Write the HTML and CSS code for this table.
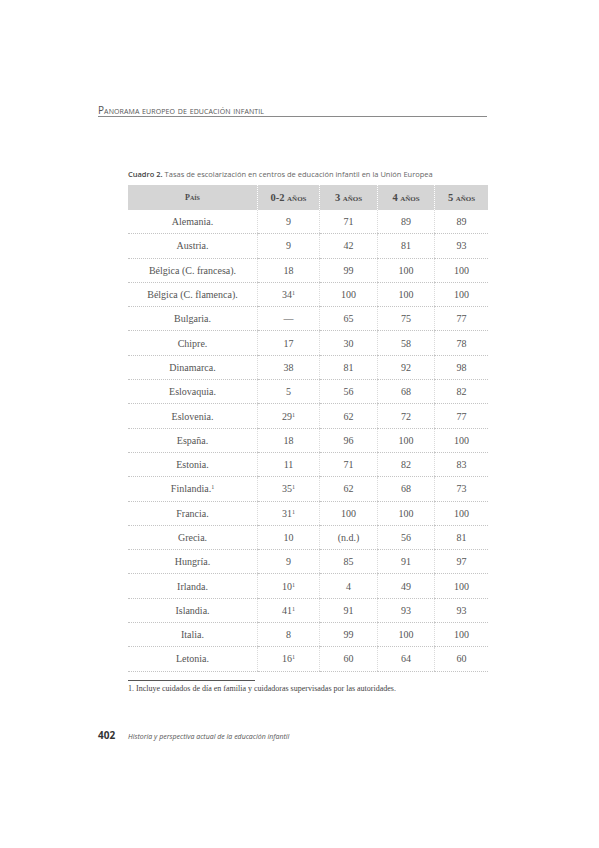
FILE: index.html
```html
<!DOCTYPE html>
<html lang="es">
<head>
<meta charset="utf-8">
<link rel="stylesheet" href="styles.css">
</head>
<body>
<div class="page">
  <header class="running-head">Panorama europeo de educación infantil</header>
  <section class="figure">
    <p class="caption"><b>Cuadro 2.</b> Tasas de escolarización en centros de educación infantil en la Unión Europea</p>
    <table class="data">
      <thead>
        <tr><th>País</th><th><span class="num">0-2</span> años</th><th><span class="num">3</span> años</th><th><span class="num">4</span> años</th><th><span class="num">5</span> años</th></tr>
      </thead>
      <tbody>
        <tr><td>Alemania.</td><td>9</td><td>71</td><td>89</td><td>89</td></tr>
        <tr><td>Austria.</td><td>9</td><td>42</td><td>81</td><td>93</td></tr>
        <tr><td>Bélgica (C. francesa).</td><td>18</td><td>99</td><td>100</td><td>100</td></tr>
        <tr><td>Bélgica (C. flamenca).</td><td>34<sup>1</sup></td><td>100</td><td>100</td><td>100</td></tr>
        <tr><td>Bulgaria.</td><td>—</td><td>65</td><td>75</td><td>77</td></tr>
        <tr><td>Chipre.</td><td>17</td><td>30</td><td>58</td><td>78</td></tr>
        <tr><td>Dinamarca.</td><td>38</td><td>81</td><td>92</td><td>98</td></tr>
        <tr><td>Eslovaquia.</td><td>5</td><td>56</td><td>68</td><td>82</td></tr>
        <tr><td>Eslovenia.</td><td>29<sup>1</sup></td><td>62</td><td>72</td><td>77</td></tr>
        <tr><td>España.</td><td>18</td><td>96</td><td>100</td><td>100</td></tr>
        <tr><td>Estonia.</td><td>11</td><td>71</td><td>82</td><td>83</td></tr>
        <tr><td>Finlandia.<sup>1</sup></td><td>35<sup>1</sup></td><td>62</td><td>68</td><td>73</td></tr>
        <tr><td>Francia.</td><td>31<sup>1</sup></td><td>100</td><td>100</td><td>100</td></tr>
        <tr><td>Grecia.</td><td>10</td><td>(n.d.)</td><td>56</td><td>81</td></tr>
        <tr><td>Hungría.</td><td>9</td><td>85</td><td>91</td><td>97</td></tr>
        <tr><td>Irlanda.</td><td>10<sup>1</sup></td><td>4</td><td>49</td><td>100</td></tr>
        <tr><td>Islandia.</td><td>41<sup>1</sup></td><td>91</td><td>93</td><td>93</td></tr>
        <tr><td>Italia.</td><td>8</td><td>99</td><td>100</td><td>100</td></tr>
        <tr><td>Letonia.</td><td>16<sup>1</sup></td><td>60</td><td>64</td><td>60</td></tr>
      </tbody>
    </table>
    <div class="footnotes">
      <p>1. Incluye cuidados de día en familia y cuidadoras supervisadas por las autoridades.</p>
    </div>
  </section>
  <footer class="folio"><span class="pageno">402</span><span class="book">Historia y perspectiva actual de la educación infantil</span></footer>
</div>
</body>
</html>
```

FILE: styles.css
```css
html, body {
  margin: 0;
  padding: 0;
  background: #fff;
}
.page {
  width: 599px;
  height: 848px;
  box-sizing: border-box;
  padding: 105px 0 0 98px;
  font-family: "Open Sans", "Noto Sans", sans-serif;
  color: #444;
}
.running-head {
  width: 389px;
  font-size: 10px;
  line-height: 10px;
  font-variant: small-caps;
  letter-spacing: 0.1px;
  color: #555;
  border-bottom: 1px solid #8a8a8a;
  padding-bottom: 1px;
}
.figure {
  margin: 52px 0 0 30px;
  width: 360px;
}
.caption {
  margin: 0;
  font-size: 7.5px;
  line-height: 10px;
  color: #666;
  white-space: nowrap;
}
.caption b {
  font-weight: 600;
  color: #444;
}
.data {
  margin-top: 6px;
  width: 360px;
  border-collapse: collapse;
  table-layout: fixed;
  font-family: "Liberation Serif", "DejaVu Serif", serif;
  font-size: 10px;
  color: #555;
}
.data th {
  background: #d5d5d5;
  height: 25px;
  padding: 0;
  font-weight: bold;
  font-variant: small-caps;
  font-size: 10px;
  color: #4a4a4a;
  border-left: 1px dotted #fff;
}
.data th:first-child { border-left: none; font-size: 8px; }
.data th .num { font-size: 10.5px; }
.data th:nth-child(1), .data td:nth-child(1) { width: 129px; }
.data th:nth-child(2), .data td:nth-child(2) { width: 61px; }
.data th:nth-child(3), .data td:nth-child(3) { width: 57px; }
.data th:nth-child(4), .data td:nth-child(4) { width: 56px; }
.data td {
  height: 23.3px;
  padding: 0;
  text-align: center;
  border-bottom: 1px dotted #c4c4c4;
  border-left: 1px dotted #dadada;
}
.data td:first-child { border-left: none; }
.data sup {
  font-size: 6px;
  vertical-align: 3px;
  line-height: 0;
}
.footnotes {
  margin-top: 8px;
  width: 127px;
  border-top: 1px solid #555;
}
.footnotes p {
  margin: 3px 0 0;
  width: 360px;
  font-family: "Liberation Serif", serif;
  font-size: 8px;
  line-height: 10px;
  color: #444;
  white-space: nowrap;
}
.folio {
  margin-top: 34px;
  display: flex;
  align-items: baseline;
  font-size: 7px;
  color: #555;
}
.pageno {
  width: 30px;
  font-weight: bold;
  font-size: 10px;
  color: #333;
}
.book {
  font-style: italic;
}
```
